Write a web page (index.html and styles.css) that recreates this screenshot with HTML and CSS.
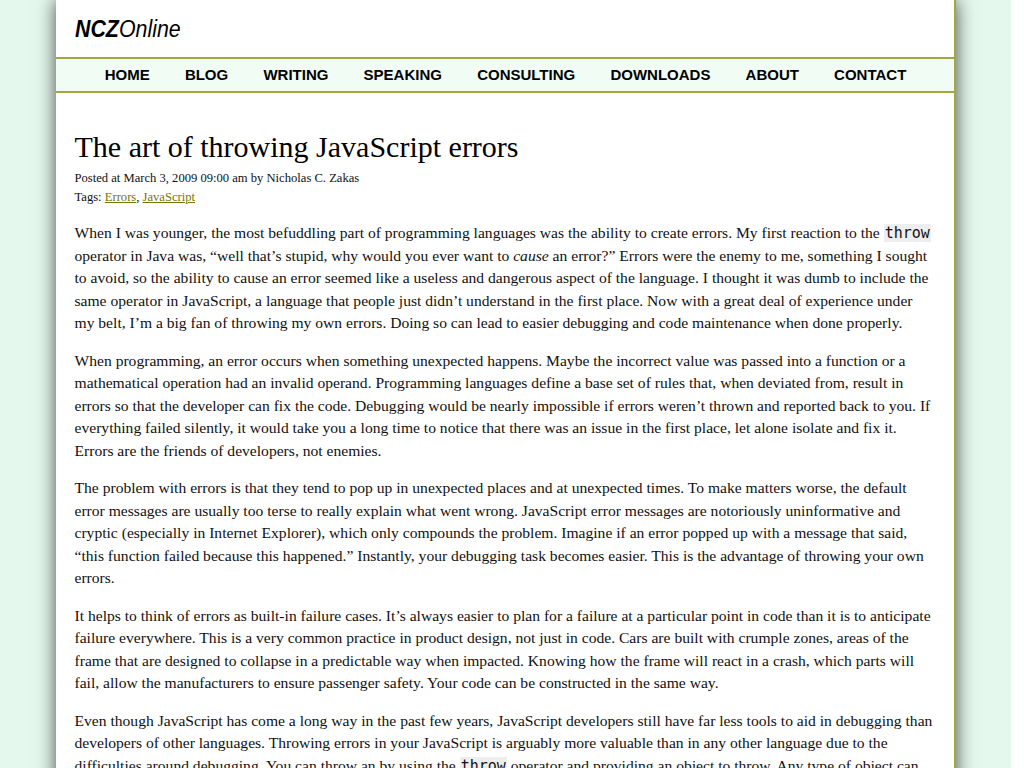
FILE: index.html
```html
<!DOCTYPE html>
<html>
<head>
<meta charset="utf-8">
<title>The art of throwing JavaScript errors - NCZOnline</title>
<link rel="stylesheet" href="styles.css">
</head>
<body>
<div class="page">
  <header class="site-header">
    <div class="logo"><span class="logo-bold">NCZ</span>Online</div>
  </header>
  <nav class="nav">
    <a href="#">Home</a>
    <a href="#">Blog</a>
    <a href="#">Writing</a>
    <a href="#">Speaking</a>
    <a href="#">Consulting</a>
    <a href="#">Downloads</a>
    <a href="#">About</a>
    <a href="#">Contact</a>
  </nav>
  <main class="content">
    <h1 class="title">The art of throwing JavaScript errors</h1>
    <div class="meta">Posted at March 3, 2009 09:00 am by Nicholas C. Zakas</div>
    <div class="meta">Tags: <a href="#">Errors</a>, <a href="#">JavaScript</a></div>
    <p>When I was younger, the most befuddling part of programming languages was the ability to create errors. My first reaction to the <code>throw</code> operator in Java was, “well that’s stupid, why would you ever want to <em>cause</em> an error?” Errors were the enemy to me, something I sought to avoid, so the ability to cause an error seemed like a useless and dangerous aspect of the language. I thought it was dumb to include the same operator in JavaScript, a language that people just didn’t understand in the first place. Now with a great deal of experience under my belt, I’m a big fan of throwing my own errors. Doing so can lead to easier debugging and code maintenance when done properly.</p>
    <p>When programming, an error occurs when something unexpected happens. Maybe the incorrect value was passed into a function or a mathematical operation had an invalid operand. Programming languages define a base set of rules that, when deviated from, result in errors so that the developer can fix the code. Debugging would be nearly impossible if errors weren’t thrown and reported back to you. If everything failed silently, it would take you a long time to notice that there was an issue in the first place, let alone isolate and fix it. Errors are the friends of developers, not enemies.</p>
    <p>The problem with errors is that they tend to pop up in unexpected places and at unexpected times. To make matters worse, the default error messages are usually too terse to really explain what went wrong. JavaScript error messages are notoriously uninformative and cryptic (especially in Internet Explorer), which only compounds the problem. Imagine if an error popped up with a message that said, “this function failed because this happened.” Instantly, your debugging task becomes easier. This is the advantage of throwing your own errors.</p>
    <p>It helps to think of errors as built-in failure cases. It’s always easier to plan for a failure at a particular point in code than it is to anticipate failure everywhere. This is a very common practice in product design, not just in code. Cars are built with crumple zones, areas of the frame that are designed to collapse in a predictable way when impacted. Knowing how the frame will react in a crash, which parts will fail, allow the manufacturers to ensure passenger safety. Your code can be constructed in the same way.</p>
    <p>Even though JavaScript has come a long way in the past few years, JavaScript developers still have far less tools to aid in debugging than developers of other languages. Throwing errors in your JavaScript is arguably more valuable than in any other language due to the difficulties around debugging. You can throw an by using the <code>throw</code> operator and providing an object to throw. Any type of object can be thrown, however, an <code>Error</code> object is the most typical to use:</p>
  </main>
</div>
</body>
</html>
```

FILE: styles.css
```css
html {
  background: #ffffff;
}
body {
  margin: 0;
  width: 1011px;
  background: #e5f8ed;
  font-family: "Liberation Serif", "Times New Roman", serif;
  color: #111;
}
.page {
  width: 898px;
  margin: 0 auto;
  background: #ffffff;
  border-right: 2px solid #a3a83c;
  box-shadow: 0 0 18px rgba(0, 0, 0, 0.7);
}
.site-header {
  height: 58px;
  box-sizing: border-box;
  padding: 14px 0 0 19px;
}
.logo {
  display: inline-block;
  font-family: "Liberation Sans", Arial, sans-serif;
  font-style: italic;
  font-size: 24px;
  line-height: 30px;
  color: #000;
  transform: scaleX(0.89);
  transform-origin: left center;
}
.logo-bold {
  font-weight: bold;
}
.nav {
  display: flex;
  justify-content: center;
  border-top: 2px solid #a3a83c;
  border-bottom: 2px solid #a3a83c;
  background: #f1fcf4;
  height: 32px;
  box-sizing: content-box;
  align-items: center;
  padding: 0 0 0 2px;
  margin-top: -1px;
}
.nav a {
  font-family: "Liberation Sans", Arial, sans-serif;
  font-weight: bold;
  font-size: 15px;
  line-height: 18px;
  margin-top: -1px;
  text-transform: uppercase;
  color: #000;
  text-decoration: none;
  padding: 0 17.6px;
}
.content {
  padding: 36px 19px 20px 19px;
}
.title {
  font-size: 30px;
  font-weight: normal;
  margin: 0 0 4px 0;
  line-height: 36px;
  color: #000;
}
.meta {
  font-size: 12.6px;
  line-height: 19px;
}
.meta a {
  color: #76760a;
}
.content p {
  font-size: 15.6px;
  line-height: 22.5px;
  margin: 15px 0 0 0;
}
.content .meta + p {
  margin-top: 15px;
}
code {
  font-family: "DejaVu Sans Mono", monospace;
  font-size: 15px;
  background: #eeeeee;
  padding: 0 1px;
}
```
